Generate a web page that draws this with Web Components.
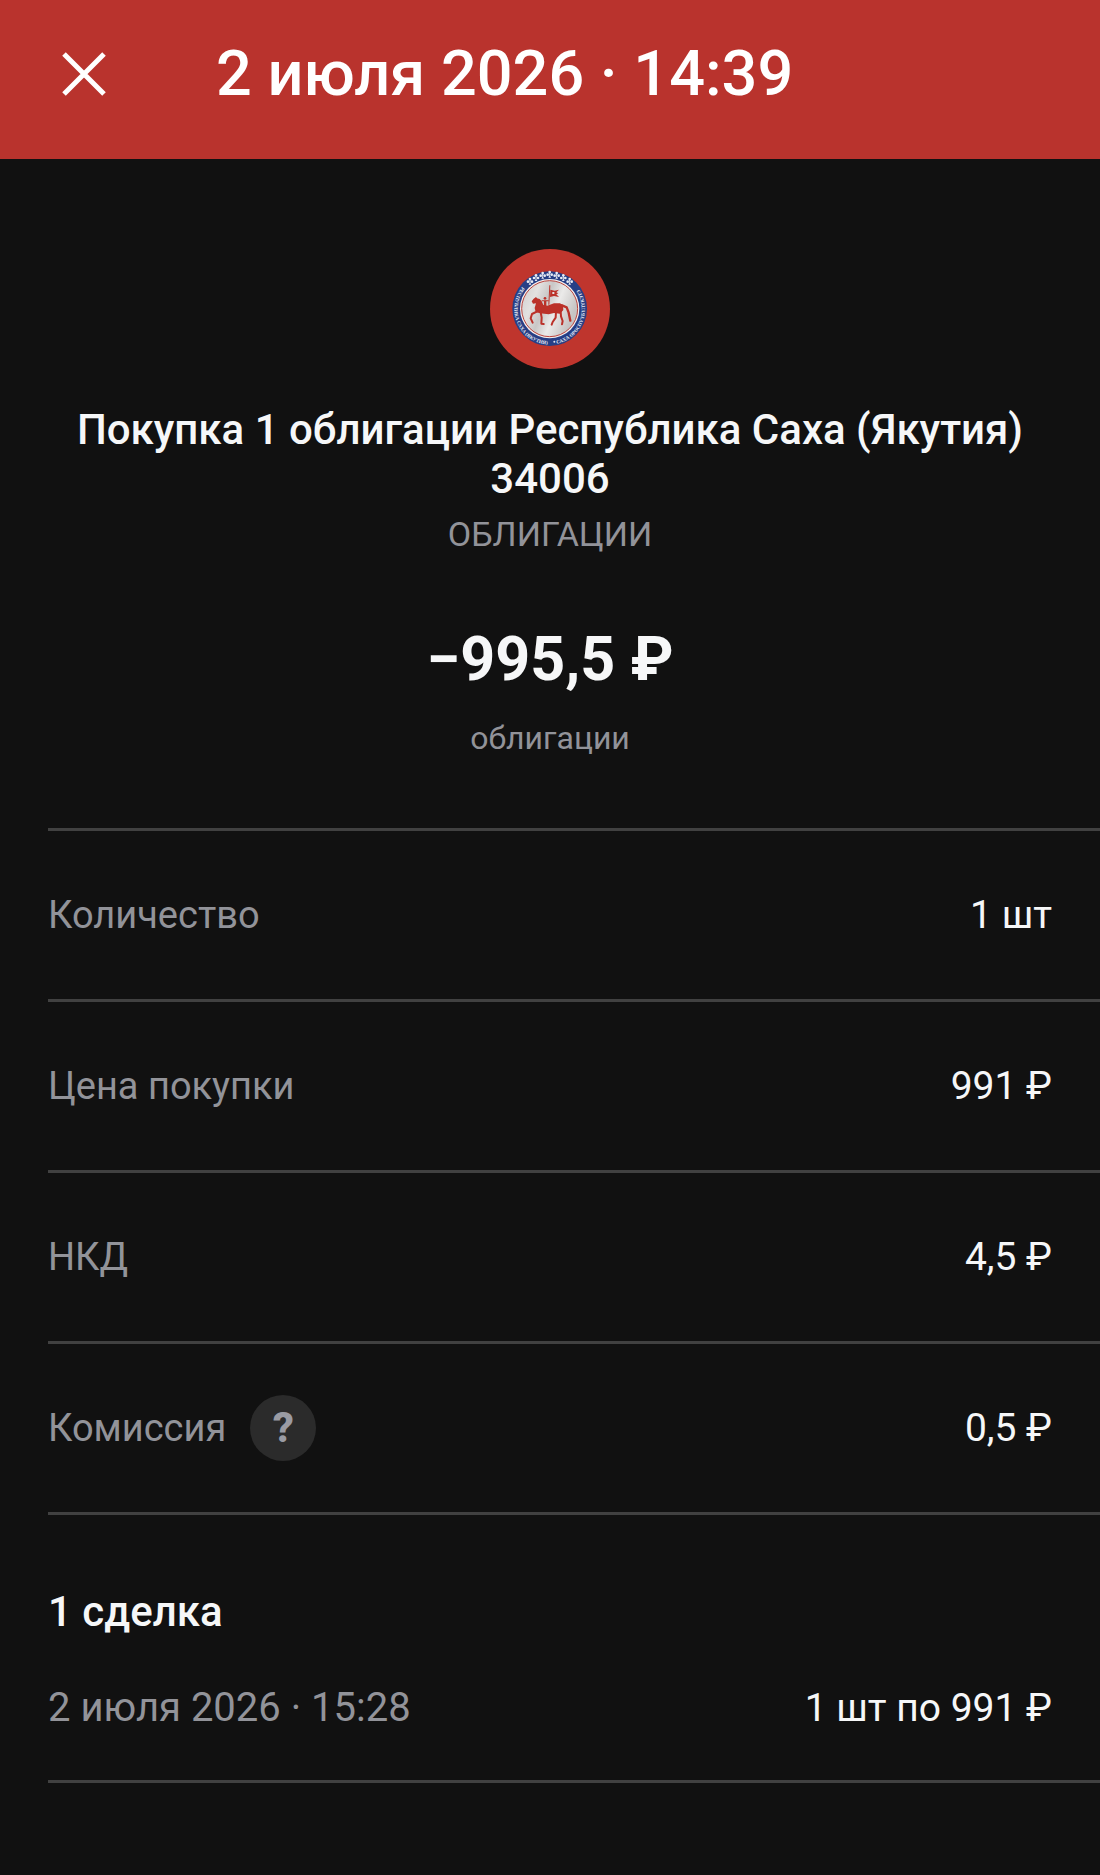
<!DOCTYPE html>
<html lang="ru">
<head>
<meta charset="utf-8">
<meta name="viewport" content="width=device-width, initial-scale=1">
<title>2 июля 2026 · 14:39</title>
<style>
  body {
    margin: 0;
    min-height: 100vh;
    background-color: #111111;
    color: #f6f7f8;
    font-family: Roboto, "Noto Sans", sans-serif;
    font-size: 39px;
    line-height: 48px;
    --muted: #929399;
    --line: #414141;
    --accent: #b9332d;
  }
</style>
</head>
<body>
<operation-page>
  <app-header slot="header">2 июля 2026 · 14:39</app-header>
  <operation-summary>
    <issuer-logo slot="logo"></issuer-logo>
    <span slot="title">Покупка 1 облигации Республика Саха (Якутия) 34006</span>
    <span slot="kind">ОБЛИГАЦИИ</span>
    <span slot="amount">−995,5 ₽</span>
    <span slot="account">облигации</span>
  </operation-summary>
  <detail-row label="Количество">1 шт</detail-row>
  <detail-row label="Цена покупки">991 ₽</detail-row>
  <detail-row label="НКД">4,5 ₽</detail-row>
  <detail-row label="Комиссия"><hint-button slot="hint"></hint-button>0,5 ₽</detail-row>
  <deal-list heading="1 сделка">
    <span slot="date">2 июля 2026 · 15:28</span>
    <span slot="total">1 шт по 991 ₽</span>
  </deal-list>
</operation-page>

<script>
class OperationPage extends HTMLElement {
  constructor() {
    super();
    this.shadowDOM = this.attachShadow({ mode: 'open' });
  }

  connectedCallback() {
    this.shadowDOM.innerHTML = `
      <style>
        :host {
          display: block;
        }

        main {
          display: flex;
          flex-direction: column;
        }
      </style>

      <slot name="header"></slot>
      <main><slot></slot></main>
    `;
  }
}

class AppHeader extends HTMLElement {
  constructor() {
    super();
    this.shadowDOM = this.attachShadow({ mode: 'open' });
  }

  connectedCallback() {
    this.shadowDOM.innerHTML = `
      <style>
        :host {
          display: block;
          background-color: var(--accent);
          color: #ffffff;
        }

        header {
          display: flex;
          align-items: center;
          gap: 96px;
          padding: 36px 48px 47px;
        }

        button {
          display: flex;
          align-items: center;
          justify-content: center;
          width: 72px;
          height: 76px;
          padding: 0;
          border: 0;
          background: none;
          color: inherit;
          cursor: pointer;
        }

        h1 {
          flex: 1;
          margin: 0;
          font-size: 63px;
          line-height: 76px;
          font-weight: 500;
        }
      </style>

      <header>
        <button type="button" aria-label="Закрыть">
          <svg width="44" height="44" viewBox="0 0 44 44" fill="none" stroke="currentColor" stroke-width="5">
            <path d="M2 2 42 42M42 2 2 42"/>
          </svg>
        </button>
        <h1><slot></slot></h1>
      </header>
    `;
  }
}

class IssuerLogo extends HTMLElement {
  constructor() {
    super();
    this.shadowDOM = this.attachShadow({ mode: 'open' });
  }

  connectedCallback() {
    // seven white ornaments along the top of the ring
    const ornaments = [[150, 124], [168, 113], [188, 106], [209, 103], [230, 106], [250, 113], [269, 124]]
      .map(([x, y]) => `<use href="#ornament" x="${x}" y="${y}"/>`)
      .join('');

    this.shadowDOM.innerHTML = `
      <style>
        :host {
          display: block;
        }

        svg {
          display: block;
          width: 120px;
          height: 120px;
        }

        text {
          font-family: "Liberation Serif", serif;
          font-size: 15px;
          font-weight: bold;
          fill: #e8ebf4;
        }
      </style>

      <svg viewBox="30 27 360 360" aria-hidden="true">
        <defs>
          <linearGradient id="silver" x1="0" y1="0" x2="1" y2="0.4">
            <stop offset="0" stop-color="#cfcccb"/>
            <stop offset="0.3" stop-color="#e3e1e0"/>
            <stop offset="0.5" stop-color="#c9c7c6"/>
            <stop offset="0.7" stop-color="#ebeae9"/>
            <stop offset="1" stop-color="#c6c4c3"/>
          </linearGradient>
          <g id="ornament">
            <circle cx="0" cy="-7" r="4"/>
            <circle cx="-6" cy="1" r="4"/>
            <circle cx="6" cy="1" r="4"/>
            <path d="M-2-6H2L1 4 4 10H-4L-1 4Z"/>
          </g>
          <path id="rim" d="M128 139A106 106 0 1 0 290 139"/>
        </defs>
        <circle cx="210" cy="207" r="180" fill="#bf352d"/>
        <circle cx="209" cy="206" r="112" fill="#263f86"/>
        <g fill="#e8ebf4">${ornaments}</g>
        <text><textPath href="#rim" startOffset="2">РЕСПУБЛИКА САХА (ЯКУТИЯ)</textPath></text>
        <text><textPath href="#rim" startOffset="262">САХА ӨРӨСПҮҮБҮЛҮКЭТЭ</textPath></text>
        <circle cx="223" cy="305" r="3" fill="#dfe3ee"/>
        <circle cx="209" cy="206" r="89" fill="#f3efee"/>
        <circle cx="209" cy="206" r="84" fill="url(#silver)" stroke="#b9433d" stroke-width="3"/>
        <g fill="#bb3129">
          <path d="M208 136h3l-3 58h-3ZM211 149l13 3 13-3-8 8 6 3-6 3 8 8-15-3-12 3Z"/>
          <path d="M217 156h6v6h-6Z" fill="#e3e1e0"/>
          <circle cx="195" cy="175" r="4"/>
          <path d="M185 181H206V184H199V200L192 202V184H185Z"/>
          <path d="M155 184 161 176 168 171 171 175 179 177 185 184 190 195 202 197 222 190 240 190 249 196 250 210 240 221 222 219 206 223 180 220 167 216 164 204 168 190 159 191Z"/>
        </g>
        <g fill="none" stroke="#bb3129" stroke-width="6" stroke-linejoin="round" stroke-linecap="round">
          <path d="M172 214 156 222 152 235 158 248"/>
          <path d="M182 216 185 233 184 251 191 252"/>
          <path d="M228 215 227 233 218 246 215 254"/>
          <path d="M242 214 243 229 248 243 246 253"/>
          <path d="M246 196 260 202 266 218 271 242" stroke-width="7"/>
        </g>
      </svg>
    `;
  }
}

class OperationSummary extends HTMLElement {
  constructor() {
    super();
    this.shadowDOM = this.attachShadow({ mode: 'open' });
  }

  connectedCallback() {
    this.shadowDOM.innerHTML = `
      <style>
        :host {
          display: block;
        }

        section {
          display: flex;
          flex-direction: column;
          align-items: center;
          padding: 90px 48px 66px;
          text-align: center;
        }

        h2 {
          margin: 36px 0 0;
          font-size: 42px;
          line-height: 49px;
          font-weight: 500;
        }

        p {
          margin: 0;
        }

        .kind {
          margin-top: 7px;
          color: var(--muted);
          font-size: 34px;
          line-height: 48px;
        }

        .amount {
          margin-top: 63px;
          font-size: 61px;
          line-height: 76px;
          font-weight: 700;
        }

        .account {
          margin-top: 17px;
          color: var(--muted);
          font-size: 32px;
          line-height: 48px;
        }
      </style>

      <section>
        <slot name="logo"></slot>
        <h2><slot name="title"></slot></h2>
        <p class="kind"><slot name="kind"></slot></p>
        <p class="amount"><slot name="amount"></slot></p>
        <p class="account"><slot name="account"></slot></p>
      </section>
    `;
  }
}

class DetailRow extends HTMLElement {
  constructor() {
    super();
    this.shadowDOM = this.attachShadow({ mode: 'open' });
  }

  connectedCallback() {
    this.shadowDOM.innerHTML = `
      <style>
        :host {
          display: block;
          margin-left: 48px;
          border-top: 3px solid var(--line);
        }

        .row {
          display: flex;
          align-items: center;
          justify-content: space-between;
          min-height: 168px;
          padding-right: 48px;
        }

        .label {
          display: flex;
          align-items: center;
          gap: 24px;
          color: var(--muted);
          font-size: 38px;
        }
      </style>

      <div class="row">
        <span class="label"><span>${this.getAttribute('label')}</span><slot name="hint"></slot></span>
        <span><slot></slot></span>
      </div>
    `;
  }
}

class HintButton extends HTMLElement {
  constructor() {
    super();
    this.shadowDOM = this.attachShadow({ mode: 'open' });
  }

  connectedCallback() {
    this.shadowDOM.innerHTML = `
      <style>
        :host {
          display: block;
        }

        button {
          display: block;
          width: 66px;
          height: 66px;
          padding: 0;
          border: 0;
          border-radius: 50%;
          background-color: #2b2b2b;
          color: #9a9ba3;
          font: inherit;
          font-size: 42px;
          font-weight: 800;
          cursor: pointer;
        }
      </style>

      <button type="button" title="Комиссия">?</button>
    `;
  }
}

class DealList extends HTMLElement {
  constructor() {
    super();
    this.shadowDOM = this.attachShadow({ mode: 'open' });
  }

  connectedCallback() {
    this.shadowDOM.innerHTML = `
      <style>
        :host {
          display: block;
          margin-left: 48px;
          border-top: 3px solid var(--line);
          border-bottom: 3px solid var(--line);
        }

        h3 {
          margin: 72px 0 0;
          font-size: 42px;
          line-height: 49px;
          font-weight: 500;
        }

        .deal {
          display: flex;
          align-items: center;
          justify-content: space-between;
          padding: 48px 48px 48px 0;
        }

        .date {
          color: var(--muted);
          font-size: 40px;
        }
      </style>

      <h3>${this.getAttribute('heading')}</h3>
      <div class="deal">
        <span class="date"><slot name="date"></slot></span>
        <span><slot name="total"></slot></span>
      </div>
    `;
  }
}

customElements.define('operation-page', OperationPage);
customElements.define('app-header', AppHeader);
customElements.define('issuer-logo', IssuerLogo);
customElements.define('operation-summary', OperationSummary);
customElements.define('detail-row', DetailRow);
customElements.define('hint-button', HintButton);
customElements.define('deal-list', DealList);
</script>
</body>
</html>
